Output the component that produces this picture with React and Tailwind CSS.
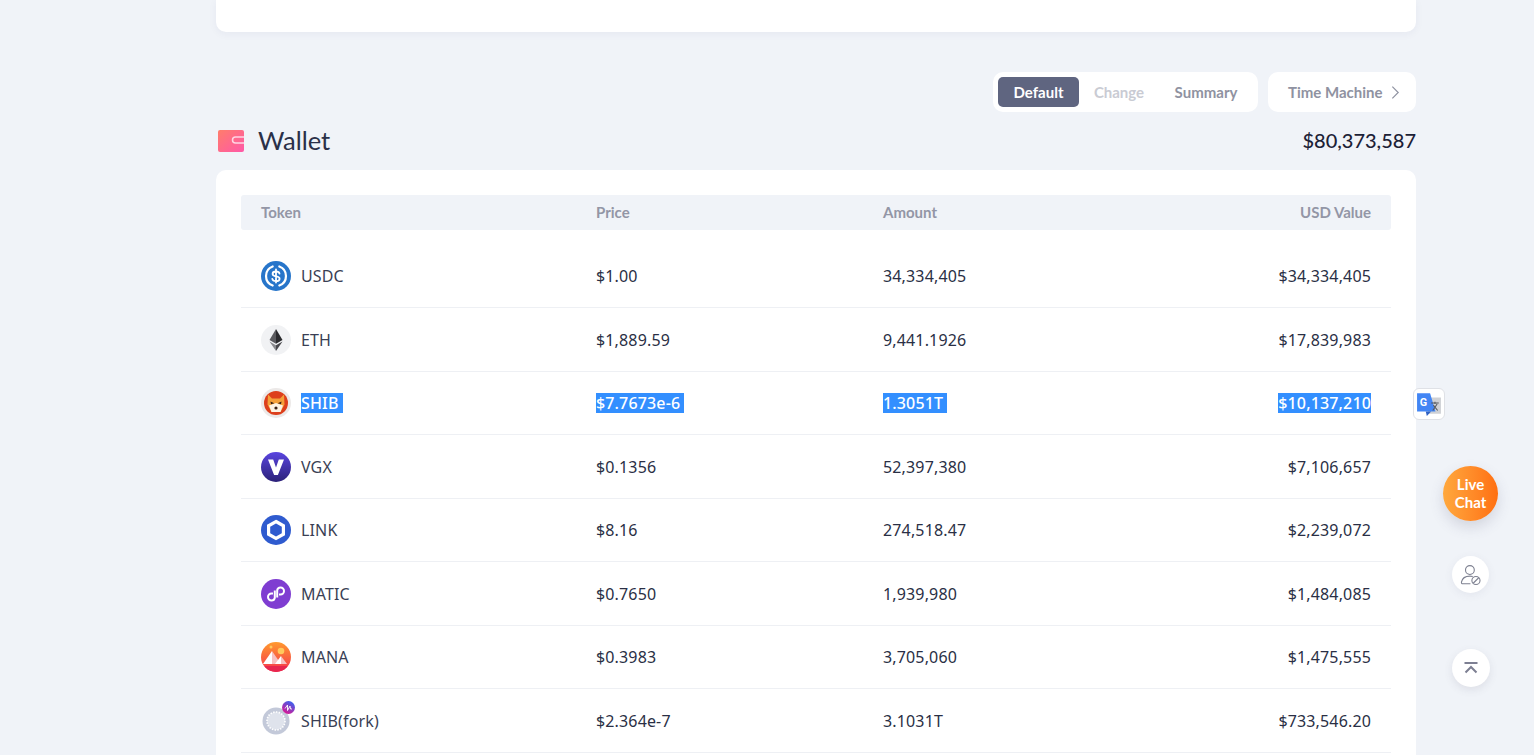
const font = { fontFamily: 'Lato, "Noto Sans", sans-serif' };

const Usdc = () => (
  <svg viewBox="0 0 30 30" className="w-[30px] h-[30px]">
    <circle cx="15" cy="15" r="15" fill="#2775ca" />
    <path d="M11.700 5.500a10.100 10.100 0 0 0 0 19M18.300 5.500a10.100 10.100 0 0 1 0 19" fill="none" stroke="#fff" strokeWidth="2.200" strokeLinecap="round" />
    <path d="M18.500 12.600c-.3-1.400-1.500-2.100-3.500-2.100-2.100 0-3.400 1-3.400 2.400 0 3.500 7 1.600 7 4.800 0 1.500-1.400 2.500-3.600 2.500-2.100 0-3.400-.8-3.700-2.300M15 8.500v13" fill="none" stroke="#fff" strokeWidth="1.800" strokeLinecap="round" />
  </svg>
);
const Eth = () => (
  <svg viewBox="0 0 30 30" className="w-[30px] h-[30px]">
    <circle cx="15" cy="15" r="15" fill="#f1f2f4" />
    <path d="M15 4 8.500 15l6.500 3.700z" fill="#5b5b5f" />
    <path d="M15 4 21.500 15 15 18.700z" fill="#2b2b2e" />
    <path d="M8.500 16.400 15 26v-5.800z" fill="#8a8a8e" />
    <path d="M21.500 16.400 15 26v-5.800z" fill="#48484c" />
  </svg>
);
const Shib = () => (
  <svg viewBox="0 0 30 30" className="w-[30px] h-[30px]">
    <circle cx="15" cy="15" r="15" fill="#ece9e8" />
    <circle cx="15" cy="15" r="12" fill="#dd3f1c" />
    <path d="M7 6.500 11 10.500h8l4-4 .5 10-4 7.500h-9l-4-7.500z" fill="#f4a03a" />
    <path d="M8 17.500 15 15l7 2.500-2.500 6.500h-9z" fill="#fdf3e4" />
    <path d="M9.500 13.500l3.800 1.800-3.300.9zM20.500 13.500l-3.800 1.800 3.300.9z" fill="#3a2013" />
    <circle cx="15" cy="20" r="1.600" fill="#3a2013" />
  </svg>
);
const Vgx = () => (
  <svg viewBox="0 0 30 30" className="w-[30px] h-[30px]">
    <defs>
      <linearGradient id="vg" x1="0.5" y1="0" x2="0.5" y2="1">
        <stop offset="0" stopColor="#5a45e0" />
        <stop offset="1" stopColor="#2b2178" />
      </linearGradient>
    </defs>
    <circle cx="15" cy="15" r="15" fill="url(#vg)" />
    <path d="M7 7.500h5.200L15 15.500l2.800-8H23L16.900 23h-3.800z" fill="#fff" />
  </svg>
);
const Link = () => (
  <svg viewBox="0 0 30 30" className="w-[30px] h-[30px]">
    <circle cx="15" cy="15" r="15" fill="#2f5bcf" />
    <path d="M15 6.500 22.400 10.750v8.500L15 23.500l-7.400-4.250v-8.500z" fill="none" stroke="#fff" strokeWidth="3.200" />
  </svg>
);
const Matic = () => (
  <svg viewBox="0 0 30 30" className="w-[30px] h-[30px]">
    <circle cx="15" cy="15" r="15" fill="#7f3dd1" />
    <path d="M13.800 11.500v7.300a3.300 3.300 0 0 1-3.300 2.700 3.500 3.500 0 0 1-3.500-3.500 3.500 3.500 0 0 1 3.500-3.500h1.500M16.200 18.500v-7.300a3.300 3.300 0 0 1 3.300-2.700 3.500 3.500 0 0 1 3.500 3.500 3.500 3.500 0 0 1-3.500 3.500H18" fill="none" stroke="#fff" strokeWidth="2" strokeLinejoin="round" />
  </svg>
);
const Mana = () => (
  <svg viewBox="0 0 30 30" className="w-[30px] h-[30px]">
    <defs>
      <linearGradient id="mn" x1="0.5" y1="0" x2="0.5" y2="1">
        <stop offset="0" stopColor="#ff9a2e" />
        <stop offset="1" stopColor="#f5324f" />
      </linearGradient>
      <clipPath id="mc"><circle cx="15" cy="15" r="15" /></clipPath>
    </defs>
    <circle cx="15" cy="15" r="15" fill="url(#mn)" />
    <g clipPath="url(#mc)">
      <path d="M2 22 11 9v13z" fill="#fff" />
      <path d="M11 9l9 13h-9z" fill="#f7c1c1" />
      <path d="M14 22l6-8v8z" fill="#fff" />
      <path d="M20 14l6 8h-6z" fill="#f7c1c1" />
      <path d="M3 24h24l-4 6H7z" fill="#e8264f" />
    </g>
    <circle cx="20" cy="9" r="3.300" fill="#ffc95c" />
    <circle cx="10" cy="5" r="1.500" fill="#ffc95c" />
  </svg>
);
const Fork = () => (
  <div className="relative w-[30px] h-[30px]">
    <svg viewBox="0 0 28 28" className="w-[28px] h-[28px] absolute left-px top-px">
      <circle cx="14" cy="14" r="13.500" fill="#c3c9d9" />
      <circle cx="14" cy="14" r="9" fill="#dfe3ec" stroke="#fff" strokeWidth="1.600" strokeDasharray="1.500 1.300" />
    </svg>
    <svg viewBox="0 0 13 13" className="w-[13px] h-[13px] absolute left-[21px] top-[-5px]">
      <defs>
        <linearGradient id="fk" x1="0.800" y1="0" x2="0.200" y2="1">
          <stop offset="0" stopColor="#2f66f5" />
          <stop offset="1" stopColor="#e5128e" />
        </linearGradient>
      </defs>
      <circle cx="6.500" cy="6.500" r="6.500" fill="url(#fk)" />
      <path d="M3 7.500 5.500 4v5.500L8 5l.5 3H10" fill="none" stroke="#fff" strokeWidth="0.900" />
    </svg>
  </div>
);

const rows = [
  { icon: <Usdc />, t: 'USDC', p: '$1.00', a: '34,334,405', v: '$34,334,405', h: 'h-[64px]' },
  { icon: <Eth />, t: 'ETH', p: '$1,889.59', a: '9,441.1926', v: '$17,839,983', h: 'h-[64px]' },
  { icon: <Shib />, t: 'SHIB', p: '$7.7673e-6', a: '1.3051T', v: '$10,137,210', h: 'h-[63px]', sel: true },
  { icon: <Vgx />, t: 'VGX', p: '$0.1356', a: '52,397,380', v: '$7,106,657', h: 'h-[64px]' },
  { icon: <Link />, t: 'LINK', p: '$8.16', a: '274,518.47', v: '$2,239,072', h: 'h-[63px]' },
  { icon: <Matic />, t: 'MATIC', p: '$0.7650', a: '1,939,980', v: '$1,484,085', h: 'h-[64px]' },
  { icon: <Mana />, t: 'MANA', p: '$0.3983', a: '3,705,060', v: '$1,475,555', h: 'h-[63px]' },
  { icon: <Fork />, t: 'SHIB(fork)', p: '$2.364e-7', a: '3.1031T', v: '$733,546.20', h: 'h-[64px]' },
];

const Cell = ({ sel, last, children }) =>
  sel ? (
    <span className={`bg-[#338fff] text-white font-medium leading-[20px] inline-block h-[20px] ${last ? '' : 'pr-[4px]'}`}>{children}</span>
  ) : (
    <span>{children}</span>
  );

export default function App() {
  return (
    <div style={font} className="relative h-[755px] overflow-hidden bg-[#f0f3f8] text-[#2a2f45]">
      <div className="ml-[216px] w-[1200px]">
        <div className="h-[32px] bg-white rounded-b-[10px] shadow-[0_2px_8px_rgba(30,40,90,0.05)]" />

        <div className="mt-[40px] flex justify-end gap-[10px]">
          <div className="h-[40px] w-[265px] bg-white rounded-[10px] flex items-center pl-[5px] text-[15px] font-bold">
            <div className="w-[81px] h-[30px] rounded-[5px] bg-[#5f6580] text-white flex items-center justify-center">Default</div>
            <div className="w-[80px] text-center text-[#c9cbd3]">Change</div>
            <div className="w-[94px] text-center text-[#8f92a1]">Summary</div>
          </div>
          <div className="h-[40px] w-[148px] bg-white rounded-[10px] flex items-center pl-[20px] gap-[8px] text-[15px] font-bold text-[#8f92a1]">
            <span>Time Machine</span>
            <svg viewBox="0 0 10 16" className="w-[9px] h-[15px]" fill="none" stroke="#8f92a1" strokeWidth="1.300">
              <path d="M1.500 1.500 8 8l-6.500 6.500" />
            </svg>
          </div>
        </div>

        <div className="mt-[13px] h-[31px] flex items-center justify-between">
          <div className="flex items-center">
            <svg viewBox="0 0 26 22" className="w-[26px] h-[22px] ml-[2px]">
              <defs>
                <linearGradient id="wl" x1="0" y1="0" x2="1" y2="1">
                  <stop offset="0" stopColor="#ff7d6b" />
                  <stop offset="1" stopColor="#ff58a8" />
                </linearGradient>
              </defs>
              <rect width="26" height="22" rx="2" fill="url(#wl)" />
              <path d="M26 7h-8.500a3 3 0 0 0 0 6H26" fill="none" stroke="#ffd5e4" strokeWidth="1.500" />
            </svg>
            <span className="ml-[14px] text-[25.500px] leading-[31px] text-[#2a3048]">Wallet</span>
          </div>
          <span className="text-[20px] font-medium text-[#1c2136] mb-[2px]">$80,373,587</span>
        </div>

        <div className="mt-[14px] bg-white rounded-t-[10px] px-[25px] pt-[25px] h-[600px]">
          <div className="h-[35px] rounded-[3px] bg-[#f0f3f8] grid grid-cols-[335px_287px_1fr_1fr] items-center px-[20px] text-[15px] font-bold text-[#9396a6]">
            <span>Token</span>
            <span>Price</span>
            <span>Amount</span>
            <span className="text-right">USD Value</span>
          </div>
          <div className="mt-[14px] font-['Noto_Sans',sans-serif] tracking-[0.15px]">
            {rows.map((r) => (
              <div key={r.t} className={`${r.h} border-b border-[#eef0f4] grid grid-cols-[335px_287px_1fr_1fr] items-center px-[20px] text-[16px]`}>
                <div className="flex items-center gap-[10px]">
                  {r.icon}
                  <Cell sel={r.sel}><span className={r.sel ? '' : 'text-[#3a3f55]'}>{r.t}</span></Cell>
                </div>
                <div><Cell sel={r.sel}>{r.p}</Cell></div>
                <div><Cell sel={r.sel}>{r.a}</Cell></div>
                <div className="text-right"><Cell sel={r.sel} last>{r.v}</Cell></div>
              </div>
            ))}
          </div>
        </div>
      </div>

      <div className="absolute left-[1413px] top-[388px] w-[32px] h-[32px] bg-white rounded-[6px] border border-[#dfe1e6] flex items-center justify-center">
        <svg viewBox="0 0 24 24" className="w-[26px] h-[26px]">
          <rect x="11" y="6" width="12" height="15" fill="#cfd1d5" />
          <path d="M1 2h12l5 17H1z" fill="#4285f4" />
          <path d="M9 19h5l-4 4z" fill="#2f62c4" />
          <text x="3.500" y="13.500" fontSize="10" fontWeight="700" fill="#fff" fontFamily="Roboto, sans-serif">G</text>
          <path d="M14 11h7M17.500 10v2M15.500 18l4-6M16 13l4 5" stroke="#55595f" strokeWidth="1" fill="none" />
        </svg>
      </div>

      <div className="absolute left-[1443px] top-[466px] w-[55px] h-[55px] rounded-full bg-gradient-to-r from-[#ffa83d] to-[#ff6f0f] shadow-[0_6px_14px_rgba(80,80,110,0.18)] flex items-center justify-center text-center text-white text-[15px] leading-[18px] font-bold pb-[1px]">
        Live<br />Chat
      </div>

      <div className="absolute left-[1452px] top-[556px] w-[37px] h-[37px] rounded-full bg-white shadow-[0_2px_8px_rgba(80,80,110,0.08)] flex items-center justify-center">
        <svg viewBox="0 0 20 20" className="w-[22px] h-[22px]" fill="none" stroke="#7d8090" strokeWidth="1">
          <circle cx="9" cy="5.500" r="4" />
          <path d="M9.500 18H2.500a1.200 1.200 0 0 1-1.200-1.500C2 13 5 11 9 11c1 0 1.800.1 2.600.4" />
          <circle cx="14.500" cy="15" r="3.700" />
          <path d="M12 17.500l5-5" />
        </svg>
      </div>

      <div className="absolute left-[1452px] top-[649px] w-[38px] h-[38px] rounded-full bg-white shadow-[0_3px_8px_rgba(80,80,110,0.12)] flex items-center justify-center">
        <svg viewBox="0 0 16 14" className="w-[16px] h-[14px]" fill="none" stroke="#7d7f92" strokeWidth="2">
          <path d="M1.500 2h13M2.500 11.500 8 6l5.500 5.500" />
        </svg>
      </div>
    </div>
  );
}
